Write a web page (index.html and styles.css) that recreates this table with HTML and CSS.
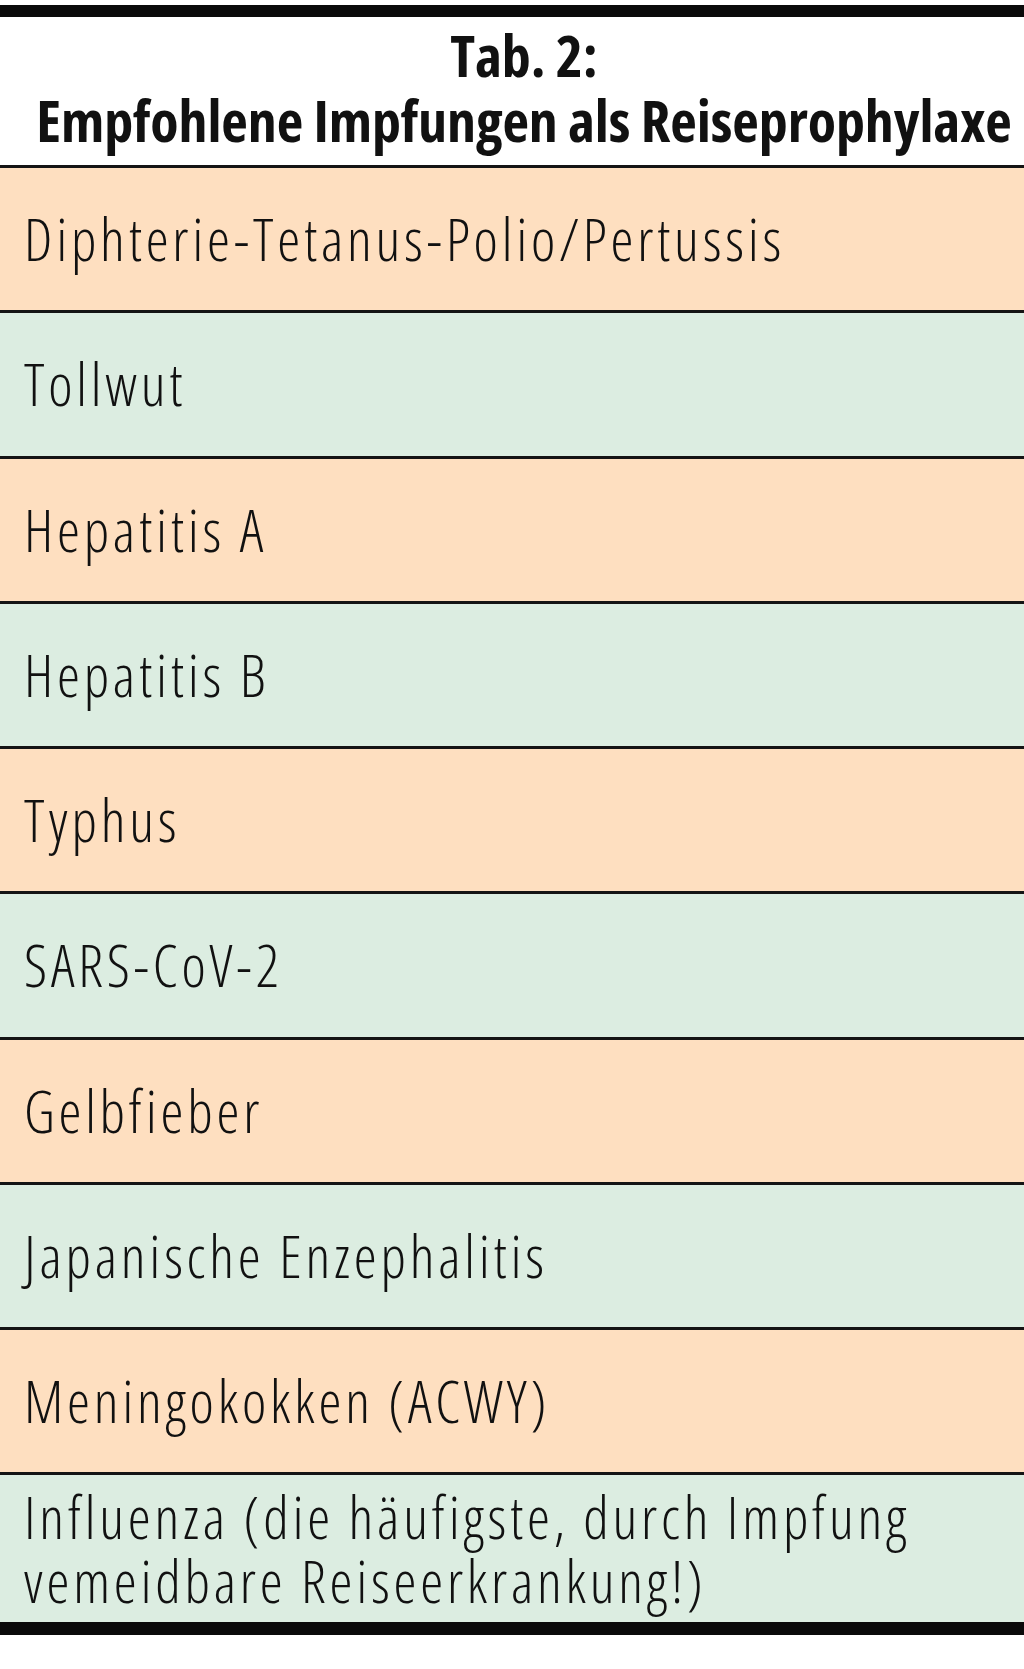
FILE: index.html
```html
<!DOCTYPE html>
<html lang="de">
<head>
<meta charset="utf-8">
<title>Tab. 2: Empfohlene Impfungen als Reiseprophylaxe</title>
<link rel="stylesheet" href="styles.css">
</head>
<body>
<section class="table">
  <header class="table-head">
    <h1 class="title">Tab. 2:<br>Empfohlene Impfungen als Reiseprophylaxe</h1>
  </header>
  <ul class="rows">
    <li class="row peach">Diphterie-Tetanus-Polio/Pertussis</li>
    <li class="row green">Tollwut</li>
    <li class="row peach">Hepatitis A</li>
    <li class="row green">Hepatitis B</li>
    <li class="row peach">Typhus</li>
    <li class="row green">SARS-CoV-2</li>
    <li class="row peach">Gelbfieber</li>
    <li class="row green">Japanische Enzephalitis</li>
    <li class="row peach">Meningokokken (ACWY)</li>
    <li class="row green last">Influenza (die häufigste, durch Impfung<br>vemeidbare Reiseerkrankung!)</li>
  </ul>
</section>
</body>
</html>
```
FILE: styles.css
```css
html, body {
  margin: 0;
  padding: 0;
  background: #ffffff;
}
body {
  padding-top: 5px;
  font-family: "Open Sans", "Lato", sans-serif;
  color: #111111;
}
.table {
  border-top: 12px solid #0a0a0a;
  border-bottom: 13px solid #0a0a0a;
}
.table-head {
  padding: 5px 0 13px 24px;
  border-bottom: 3px solid #141414;
}
.title {
  margin: 0;
  font-size: 58px;
  line-height: 65px;
  font-weight: 700;
  font-stretch: 75%;
  text-align: center;
  letter-spacing: -0.1px;
}
.rows {
  list-style: none;
  margin: 0;
  padding: 0;
}
.row {
  display: flex;
  align-items: center;
  height: 142.25px;
  box-sizing: content-box;
  padding: 0 0 0 24px;
  border-bottom: 3px solid #141414;
  font-size: 58px;
  font-weight: 300;
  font-stretch: 75%;
  letter-spacing: 3.8px;
  line-height: 64px;
}
.row.last {
  height: 128px;
  padding-top: 10px;
  padding-bottom: 9px;
  border-bottom: 0;
}
.peach { background: #fedfc0; }
.green { background: #dcede1; }
```
